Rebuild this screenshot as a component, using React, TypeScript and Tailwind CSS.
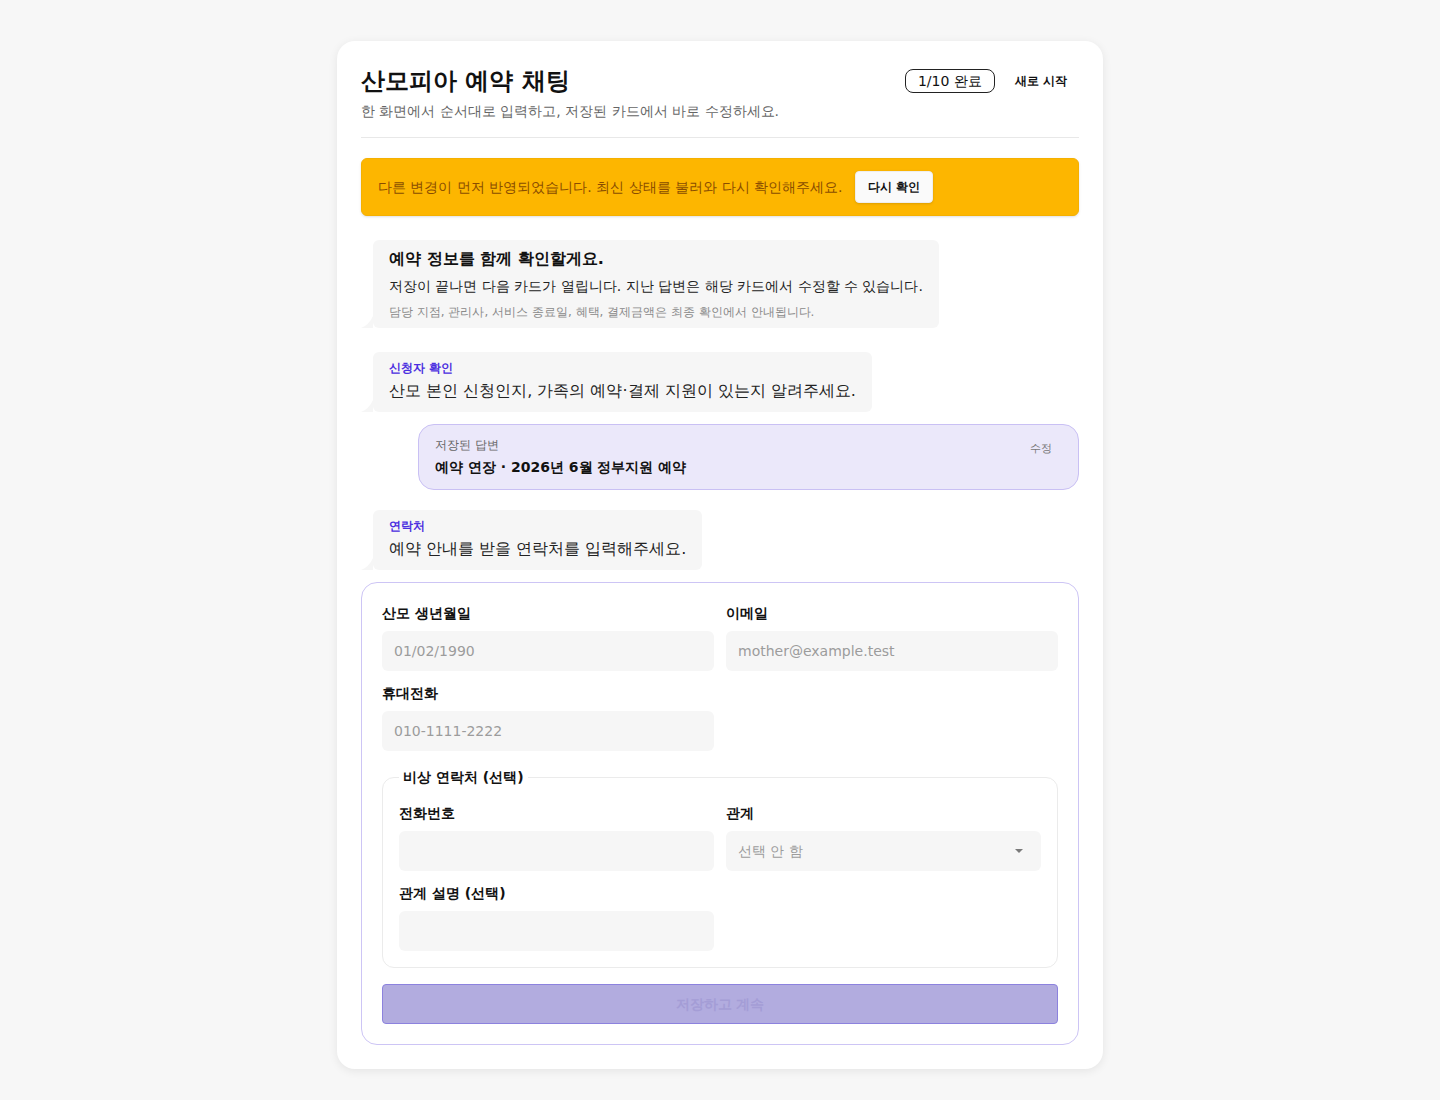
import React from "react";

function Tail() {
  return (
    <svg
      className="absolute -left-3 bottom-0 h-3 w-3"
      viewBox="0 0 12 12"
      aria-hidden="true"
    >
      <path d="M12 0 L12 12 L0 12 Q8 9 12 0 Z" fill="#f6f6f6" />
    </svg>
  );
}

function Bubble({ label, text }: { label: string; text: string }) {
  return (
    <div className="relative ml-3 self-start rounded-md bg-[#f6f6f6] px-4 pt-2 pb-[9px]">
      <Tail />
      <div className="text-[12px] font-bold leading-4 text-[#4b2fe0]">{label}</div>
      <div className="mt-[3px] text-[16px] leading-6 text-[#222]">{text}</div>
    </div>
  );
}

function Field({
  label,
  placeholder,
}: {
  label: string;
  placeholder?: string;
}) {
  return (
    <label className="flex flex-col gap-2">
      <span className="text-[14px] font-bold leading-5 text-[#111]">{label}</span>
      <input
        type="text"
        placeholder={placeholder}
        className="h-10 w-full rounded-md bg-[#f6f6f6] px-3 text-[14px] text-[#222] outline-none placeholder:text-[#9c9c9c]"
      />
    </label>
  );
}

export default function App() {
  return (
    <main className="min-h-[1100px] bg-[#f7f7f7] pt-[41px] pb-8 font-['DejaVu_Sans',sans-serif]">
      <div className="mx-auto w-[766px] rounded-[18px] bg-white p-6 shadow-[0_2px_10px_rgba(0,0,0,0.08)]">
        {/* header */}
        <header className="flex items-start justify-between border-b border-[#e8e8e8] pb-4">
          <div>
            <h1 className="text-2xl font-bold leading-8 text-[#111]">산모피아 예약 채팅</h1>
            <p className="mt-1 text-[14px] leading-5 text-[#666]">
              한 화면에서 순서대로 입력하고, 저장된 카드에서 바로 수정하세요.
            </p>
          </div>
          <div className="flex h-8 items-center gap-2">
            <span className="flex h-6 items-center rounded-lg border border-[#222] px-3 text-[14px] text-[#111]">
              1/10 완료
            </span>
            <button className="h-8 px-3 text-[12px] font-bold text-[#111]">새로 시작</button>
          </div>
        </header>

        {/* conflict banner */}
        <div className="mt-5 flex items-center gap-3 rounded-md border border-[#f5b000] bg-[#fdb600] px-4 py-3 shadow-sm">
          <p className="text-[14px] leading-5 text-[#8a4d00]">
            다른 변경이 먼저 반영되었습니다. 최신 상태를 불러와 다시 확인해주세요.
          </p>
          <button className="h-8 rounded-[4px] border border-[#eee] bg-[#fafafa] px-3 text-[12px] font-bold text-[#111] shadow-sm">
            다시 확인
          </button>
        </div>

        <div className="mt-6 flex flex-col">
          {/* intro bubble */}
          <div className="relative ml-3 self-start rounded-md bg-[#f6f6f6] px-4 py-2">
            <Tail />
            <div className="text-[16px] font-bold leading-[22px] text-[#111]">
              예약 정보를 함께 확인할게요.
            </div>
            <div className="mt-1.5 text-[14px] leading-5 text-[#222]">
              저장이 끝나면 다음 카드가 열립니다. 지난 답변은 해당 카드에서 수정할 수 있습니다.
            </div>
            <div className="mt-2 text-[12px] leading-4 text-[#8a8a8a]">
              담당 지점, 관리사, 서비스 종료일, 혜택, 결제금액은 최종 확인에서 안내됩니다.
            </div>
          </div>

          <div className="mt-6 flex flex-col">
            <Bubble
              label="신청자 확인"
              text="산모 본인 신청인지, 가족의 예약·결제 지원이 있는지 알려주세요."
            />
          </div>

          {/* saved answer */}
          <div className="mt-3 ml-[57px] flex items-start justify-between rounded-2xl border border-[#c9c0f4] bg-[#ebe8fa] py-3 pl-4 pr-4">
            <div>
              <div className="text-[12px] leading-4 text-[#666]">저장된 답변</div>
              <div className="mt-1 text-[14px] font-bold leading-5 text-[#111]">
                예약 연장 · 2026년 6월 정부지원 예약
              </div>
            </div>
            <button className="px-2.5 py-1 text-[11px] leading-4 text-[#777]">수정</button>
          </div>

          <div className="mt-5 flex flex-col">
            <Bubble label="연락처" text="예약 안내를 받을 연락처를 입력해주세요." />
          </div>

          {/* form */}
          <form className="mt-3 rounded-2xl border border-[#cdc5f5] bg-white p-5">
            <div className="grid grid-cols-2 gap-3">
              <Field label="산모 생년월일" placeholder="01/02/1990" />
              <Field label="이메일" placeholder="mother@example.test" />
              <Field label="휴대전화" placeholder="010-1111-2222" />
            </div>

            <fieldset className="mt-4 rounded-xl border border-[#ebebeb] px-4 pb-4 pt-4">
              <legend className="px-1 text-[14px] font-bold leading-5 text-[#111]">
                비상 연락처 (선택)
              </legend>
              <div className="grid grid-cols-2 gap-3">
                <Field label="전화번호" />
                <label className="flex flex-col gap-2">
                  <span className="text-[14px] font-bold leading-5 text-[#111]">관계</span>
                  <div className="relative">
                    <select
                      defaultValue=""
                      className="h-10 w-full appearance-none rounded-md bg-[#f6f6f6] px-3 text-[14px] text-[#9c9c9c] outline-none"
                    >
                      <option value="">선택 안 함</option>
                      <option value="spouse">배우자</option>
                      <option value="parent">부모</option>
                      <option value="other">기타</option>
                    </select>
                    <svg
                      className="pointer-events-none absolute right-[18px] top-1/2 h-[4px] w-[8px] -translate-y-1/2"
                      viewBox="0 0 8 4"
                      aria-hidden="true"
                    >
                      <path d="M0 0 H8 L4 4 Z" fill="#7a7a7a" />
                    </svg>
                  </div>
                </label>
                <Field label="관계 설명 (선택)" />
              </div>
            </fieldset>

            <button
              type="button"
              disabled
              className="mt-4 h-10 w-full rounded-[4px] border border-[#8c82de] bg-[#b2acdf] text-[14px] font-bold text-[#a49dd6]"
            >
              저장하고 계속
            </button>
          </form>
        </div>
      </div>
    </main>
  );
}
